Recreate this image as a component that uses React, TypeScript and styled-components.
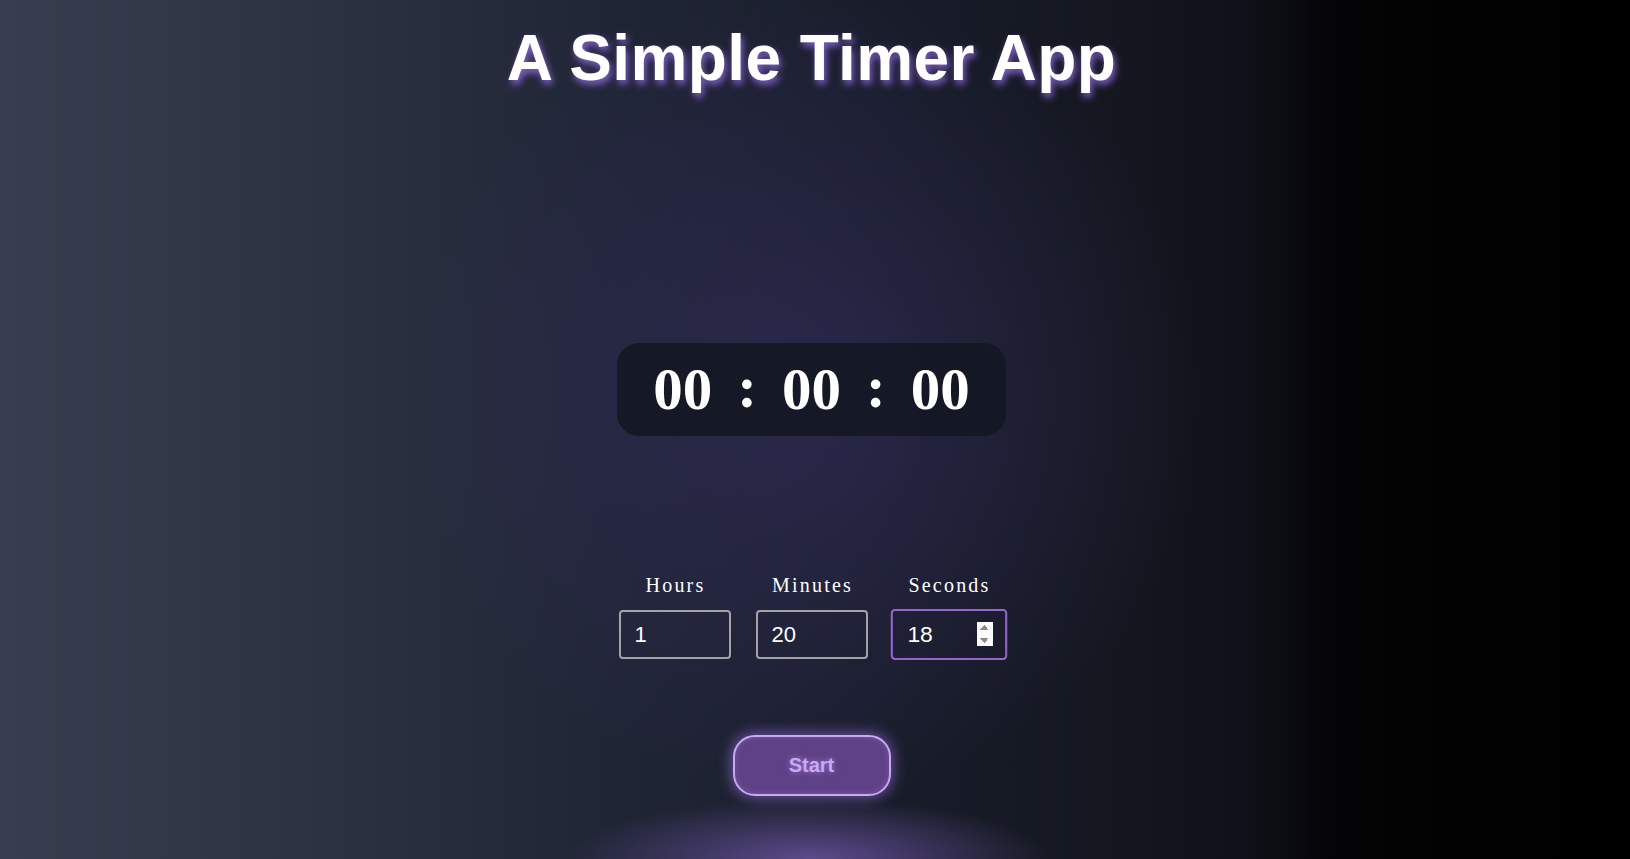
import React from "react";
import styled, { createGlobalStyle } from "styled-components";

const Global = createGlobalStyle`
  html, body { margin: 0; padding: 0; height: 100%; overflow: hidden; }
  body { font-family: "Liberation Sans", Arial, sans-serif; background: #000; }
`;

const Page = styled.main`
  min-height: 100vh;
  box-sizing: border-box;
  display: flex;
  flex-direction: column;
  align-items: center;
  padding-right: 7px;
  background:
    radial-gradient(ellipse 240px 60px at 49.7% 100%, rgba(104, 82, 156, 0.85), rgba(100, 78, 150, 0.4) 55%, rgba(100, 78, 150, 0) 100%),
    radial-gradient(circle 400px at 49.5% 46%, rgba(58, 48, 105, 0.5), rgba(58, 48, 105, 0) 100%),
    linear-gradient(90deg, #383e4f 0%, #2d3343 18%, #202536 38%, #181c29 56%, #141720 68%, #101219 76%, #0b0c12 79%, #050507 81.5%, #020203 88%, #000 100%);
`;

const Title = styled.h1`
  margin: 21px 0 0;
  font-family: "Liberation Sans", Arial, sans-serif;
  font-weight: 700;
  font-size: 64px;
  line-height: normal;
  color: #ffffff;
  letter-spacing: 0.4px;
  text-shadow: 2px 4px 7px rgba(150, 110, 235, 0.85);
`;

const Clock = styled.div`
  margin-top: 248px;
  display: flex;
  align-items: center;
  gap: 25px;
  padding: 17px 38px;
  height: 93px;
  box-sizing: border-box;
  width: 389px;
  justify-content: center;
  border-radius: 22px;
  background: rgba(20, 24, 36, 0.92);
`;

const Digits = styled.span`
  font-family: "Liberation Serif", "Times New Roman", serif;
  font-weight: 700;
  font-size: 59px;
  line-height: 1;
  color: #ffffff;
`;

const Colon = styled(Digits)`
  position: relative;
  top: -2px;
`;

const Fields = styled.div`
  margin-top: 138px;
  display: grid;
  grid-template-columns: repeat(3, 112px);
  column-gap: 25px;
`;

const Field = styled.label`
  display: flex;
  flex-direction: column;
  align-items: center;
  gap: 13px;
`;

const FieldName = styled.span`
  font-family: "Liberation Serif", "Times New Roman", serif;
  font-size: 20px;
  line-height: 23px;
  letter-spacing: 2.2px;
  padding-left: 2px;
  color: #ffffff;
`;

const NumberBox = styled.input<{ $active?: boolean }>`
  width: 112px;
  height: 49px;
  box-sizing: border-box;
  padding: 0 12px 0 14px;
  border: 2px solid ${(p) => (p.$active ? "#9466cc" : "#a3a3a6")};
  border-radius: 4px;
  background: transparent;
  color: #ffffff;
  font-family: "Liberation Sans", Arial, sans-serif;
  font-size: 22px;
  outline: none;
  transform: ${(p) => (p.$active ? "scale(1.04)" : "none")};
  color-scheme: light;
  &::-webkit-inner-spin-button,
  &::-webkit-outer-spin-button {
    opacity: ${(p) => (p.$active ? 1 : 0)};
    -webkit-appearance: ${(p) => (p.$active ? "inner-spin-button" : "none")};
    height: 24px;
    width: 18px;
  }
`;

const StartButton = styled.button`
  margin-top: 76px;
  width: 158px;
  height: 61px;
  box-sizing: border-box;
  border: 2px solid #c9a8f2;
  border-radius: 22px;
  background: #5e4186;
  color: #c8a9f6;
  font-family: "Liberation Sans", Arial, sans-serif;
  font-weight: 700;
  font-size: 20px;
  cursor: pointer;
  text-shadow: 0 0 6px rgba(200, 160, 255, 0.6);
  box-shadow: 0 0 14px 2px rgba(170, 120, 245, 0.55), inset 0 0 6px rgba(200, 160, 255, 0.25);
`;

export default function App() {
  const [h, setH] = React.useState("1");
  const [m, setM] = React.useState("20");
  const [s, setS] = React.useState("18");
  return (
    <>
      <Global />
      <Page>
        <Title>A Simple Timer App</Title>
        <Clock>
          <Digits>00</Digits>
          <Colon>:</Colon>
          <Digits>00</Digits>
          <Colon>:</Colon>
          <Digits>00</Digits>
        </Clock>
        <Fields>
          <Field>
            <FieldName>Hours</FieldName>
            <NumberBox type="number" value={h} onChange={(e) => setH(e.target.value)} />
          </Field>
          <Field>
            <FieldName>Minutes</FieldName>
            <NumberBox type="number" value={m} onChange={(e) => setM(e.target.value)} />
          </Field>
          <Field>
            <FieldName>Seconds</FieldName>
            <NumberBox type="number" $active value={s} onChange={(e) => setS(e.target.value)} />
          </Field>
        </Fields>
        <StartButton>Start</StartButton>
      </Page>
    </>
  );
}
